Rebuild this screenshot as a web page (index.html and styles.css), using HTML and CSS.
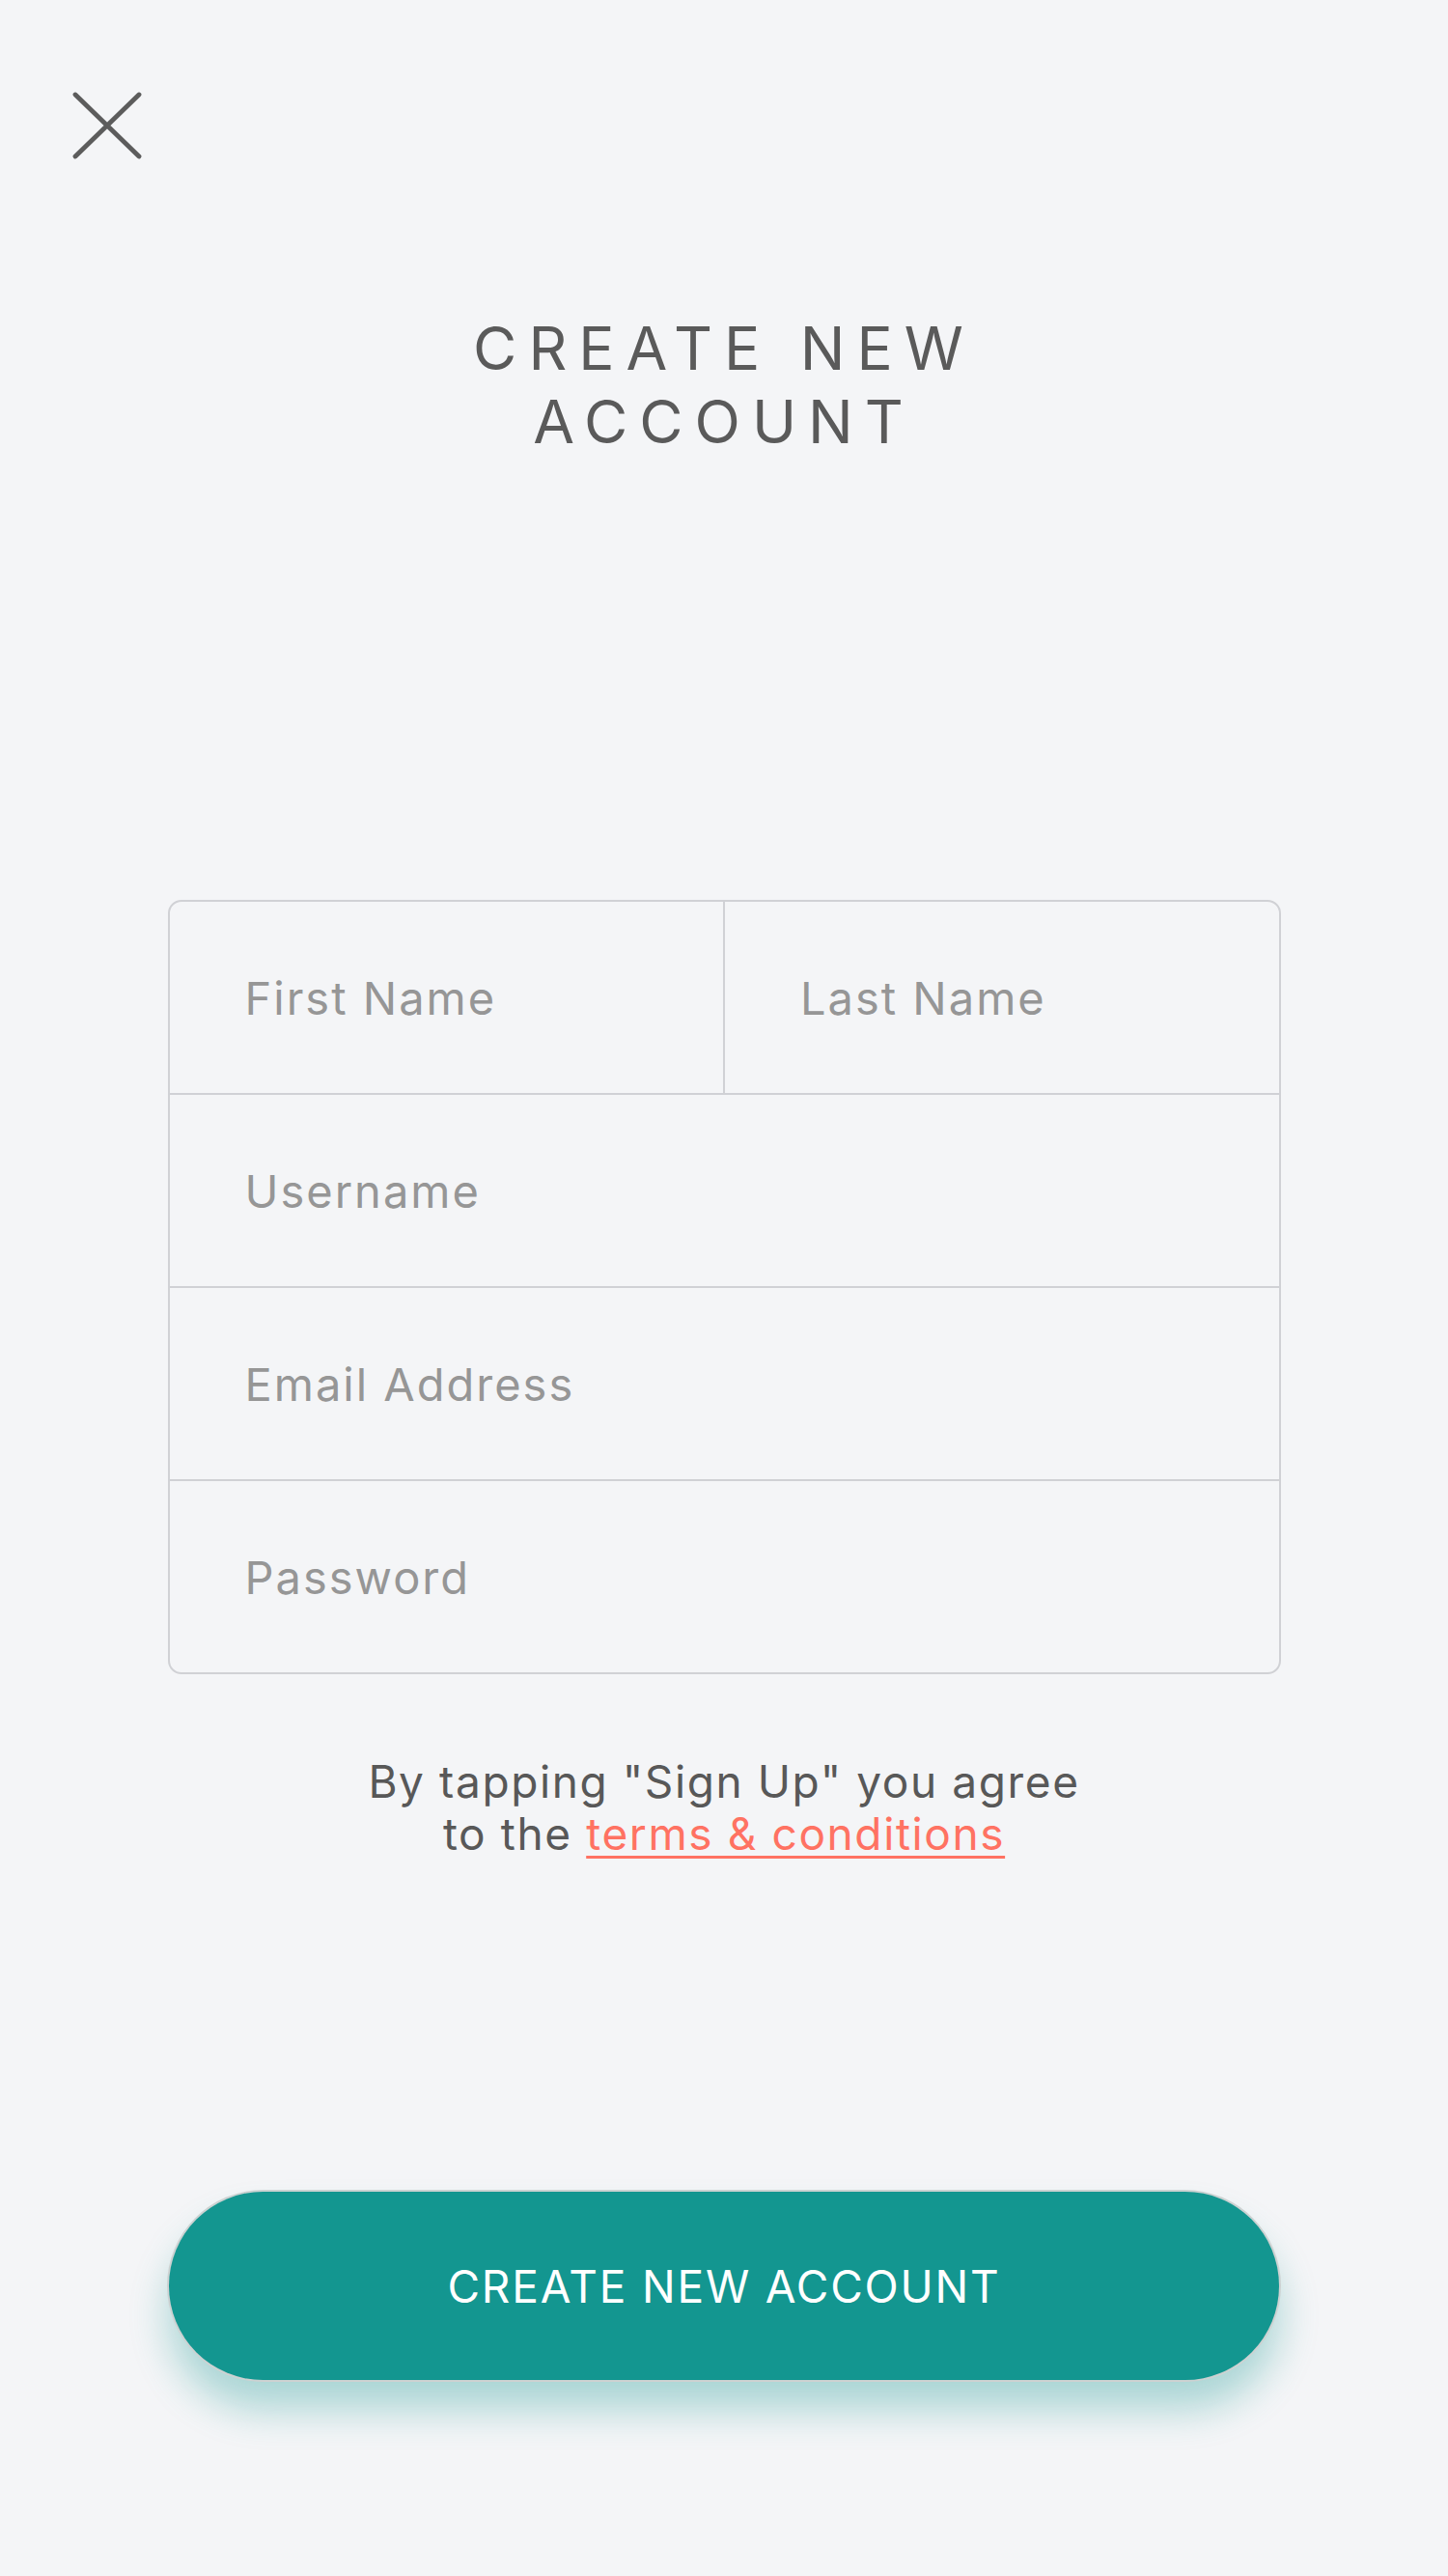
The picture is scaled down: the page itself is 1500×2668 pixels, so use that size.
FILE: index.html
```html
<!DOCTYPE html>
<html lang="en">
<head>
<meta charset="utf-8">
<title>Create New Account</title>
<link rel="stylesheet" href="styles.css">
</head>
<body>
<main class="page">
  <button class="close" aria-label="Close">
    <svg viewBox="0 0 72 70" width="72" height="70">
      <path d="M3 3 L69 67 M69 3 L3 67" stroke="#5c5c5c" stroke-width="4.8" stroke-linecap="round" fill="none"/>
    </svg>
  </button>
  <h1 class="title">CREATE NEW<br>ACCOUNT</h1>
  <form class="form">
    <div class="row split">
      <div class="field"><span class="ph">First Name</span></div>
      <div class="field"><span class="ph">Last Name</span></div>
    </div>
    <div class="row"><div class="field"><span class="ph">Username</span></div></div>
    <div class="row"><div class="field"><span class="ph">Email Address</span></div></div>
    <div class="row"><div class="field"><span class="ph">Password</span></div></div>
  </form>
  <p class="terms">By tapping "Sign Up" you agree<br>to the <a href="#" class="link">terms &amp; conditions</a></p>
  <button class="cta">CREATE NEW ACCOUNT</button>
</main>
</body>
</html>
```
FILE: styles.css
```css
html, body {
  margin: 0;
  padding: 0;
  background: #f4f5f7;
}
body {
  font-family: Inter, "Noto Sans", "Liberation Sans", sans-serif;
  color: #5a5a5a;
}
.page {
  width: 1500px;
  min-height: 2668px;
  display: flex;
  flex-direction: column;
  align-items: center;
}
.close {
  align-self: flex-start;
  margin: 95px 0 0 75px;
  padding: 0;
  border: 0;
  background: none;
  width: 72px;
  height: 70px;
  display: block;
}
.close svg { display: block; }
.title {
  margin: 158px 0 0 0;
  font-weight: 400;
  font-size: 62px;
  line-height: 76px;
  letter-spacing: 12px;
  text-align: center;
  color: #5a5a5a;
}
.form {
  margin: 457px 0 0 0;
  width: 1153px;
  box-sizing: border-box;
  border: 2px solid #d0d1d5;
  border-radius: 14px;
  display: flex;
  flex-direction: column;
}
.row {
  height: 198px;
  display: flex;
}
.row + .row { border-top: 2px solid #d0d1d5; }
.field {
  flex: 1;
  display: flex;
  align-items: center;
  padding-left: 78px;
}
.split .field + .field { border-left: 2px solid #d0d1d5; }
.ph {
  font-size: 47px;
  letter-spacing: 2px;
  color: #969696;
}
.terms {
  margin: 84px 0 0 0;
  font-size: 46px;
  line-height: 54px;
  letter-spacing: 1.6px;
  text-align: center;
  color: #585858;
}
.link {
  color: #ff7262;
  text-decoration: underline;
  text-decoration-thickness: 3px;
  text-underline-offset: 6px;
}
.cta {
  margin-top: 344px;
  width: 1150px;
  height: 195px;
  border: 0;
  border-radius: 98px;
  background: #139690;
  color: #ffffff;
  font-family: Inter, "Noto Sans", "Liberation Sans", sans-serif;
  font-size: 46px;
  letter-spacing: 1.8px;
  box-shadow: 0 0 0 2px #cdd2d2, 0 30px 40px rgba(19, 150, 143, 0.33);
}
```
